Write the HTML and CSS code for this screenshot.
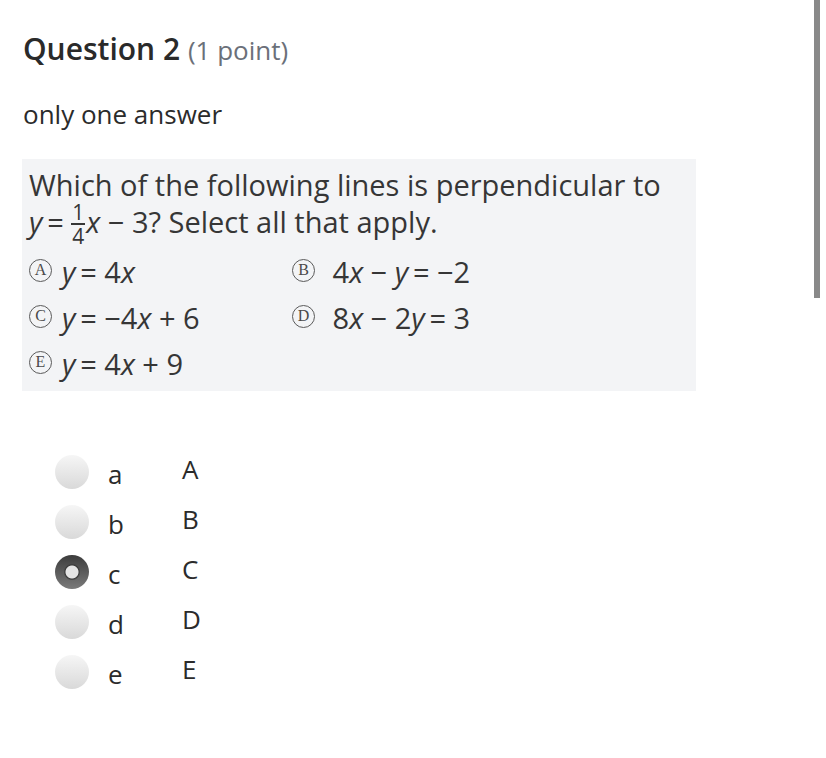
FILE: index.html
```html
<!DOCTYPE html>
<html>
<head>
<meta charset="utf-8">
<link rel="stylesheet" href="styles.css">
</head>
<body>
<div class="page">
  <h2 class="q-title">Question 2 <span class="q-points">(1 point)</span></h2>
  <p class="q-note">only one answer</p>
  <div class="q-figure">
    <div class="fig-line">Which of the following lines is perpendicular to</div>
    <div class="fig-line"><i>y</i>&#8201;= <span class="frac"><span class="num">1</span><span class="den">4</span></span><i>x</i> &minus; 3? Select all that apply.</div>
    <div class="fig-grid">
      <div class="fig-opt"><span class="circ">A</span><i>y</i>&#8201;= 4<i>x</i></div>
      <div class="fig-opt"><span class="circ">B</span> 4<i>x</i> &minus; <i>y</i>&#8201;= &minus;2</div>
      <div class="fig-opt"><span class="circ">C</span><i>y</i>&#8201;= &minus;4<i>x</i> + 6</div>
      <div class="fig-opt"><span class="circ">D</span> 8<i>x</i> &minus; 2<i>y</i>&#8201;= 3</div>
      <div class="fig-opt"><span class="circ">E</span><i>y</i>&#8201;= 4<i>x</i> + 9</div>
    </div>
  </div>
  <ul class="answers">
    <li class="answer"><span class="radio"></span><span class="key">a</span><span class="val">A</span></li>
    <li class="answer"><span class="radio"></span><span class="key">b</span><span class="val">B</span></li>
    <li class="answer"><span class="radio checked"></span><span class="key">c</span><span class="val">C</span></li>
    <li class="answer"><span class="radio"></span><span class="key">d</span><span class="val">D</span></li>
    <li class="answer"><span class="radio"></span><span class="key">e</span><span class="val">E</span></li>
  </ul>
</div>
<div class="scrollbar"></div>
</body>
</html>
```
FILE: styles.css
```css
html, body {
  margin: 0;
  padding: 0;
  background: #ffffff;
}
body {
  font-family: "Open Sans", "Noto Sans", sans-serif;
  color: #2b2b2b;
}
.page {
  padding: 29px 0 0 23px;
}
.q-title {
  margin: 0;
  font-size: 30px;
  font-weight: 600;
  color: #2a2a2a;
  line-height: 40px;
  white-space: nowrap;
}
.q-points {
  font-size: 26px;
  font-weight: 400;
  color: #6b7079;
}
.q-note {
  margin: 27px 0 0 0;
  font-size: 26px;
  line-height: 34px;
  color: #2b2b2b;
}
.q-figure {
  margin: 28px 0 0 -1px;
  width: 674px;
  height: 232px;
  background: #f3f4f6;
  padding: 7px 0 0 7px;
  box-sizing: border-box;
  font-family: "Open Sans", "Noto Sans", sans-serif;
  font-size: 29px;
  color: #363636;
  line-height: 37px;
}
.fig-line {
  height: 37px;
  white-space: nowrap;
}
.fig-line i, .fig-opt i {
  font-style: italic;
}
.frac {
  display: inline-flex;
  flex-direction: column;
  align-items: center;
  vertical-align: 13px;
  font-size: 21px;
  line-height: 17px;
  margin: 0 1px 0 0;
}
.frac .num {
  border-bottom: 2px solid #363636;
  padding: 0 1px 2px;
}
.frac .den {
  padding-top: 3px;
}
.fig-grid {
  display: grid;
  grid-template-columns: 263px 1fr;
  margin-top: 9px;
}
.fig-opt {
  height: 46px;
  line-height: 46px;
  white-space: nowrap;
}
.circ {
  display: inline-flex;
  align-items: center;
  justify-content: center;
  width: 23px;
  height: 23px;
  border: 1.5px solid #5a5a5a;
  border-radius: 50%;
  box-sizing: border-box;
  font-family: "Liberation Serif", serif;
  font-size: 16px;
  font-weight: 400;
  line-height: 16px;
  color: #4a4a4a;
  margin: 0 10px 0 0;
  vertical-align: 8px;
}
.answers {
  list-style: none;
  margin: 56px 0 0 0;
  padding: 0 0 0 32px;
}
.answer {
  display: flex;
  align-items: center;
  height: 50px;
  font-size: 26px;
  color: #2b2b2b;
}
.radio {
  width: 34px;
  height: 34px;
  border-radius: 50%;
  background: linear-gradient(#f6f6f6, #d9d9d9);
  flex: none;
  box-sizing: border-box;
}
.radio.checked {
  background: radial-gradient(circle, #e4e4e4 0 6px, #3a3a3a 7px, transparent 8.5px), linear-gradient(#3c3c3c, #7a7a7a);
}
.key {
  margin-left: 19px;
  width: 74px;
  position: relative;
  top: 2px;
}
.val {
  position: relative;
  top: -3px;
}
.scrollbar {
  position: absolute;
  left: 814px;
  top: 0;
  width: 6px;
  height: 298px;
  background: #898989;
}
```
